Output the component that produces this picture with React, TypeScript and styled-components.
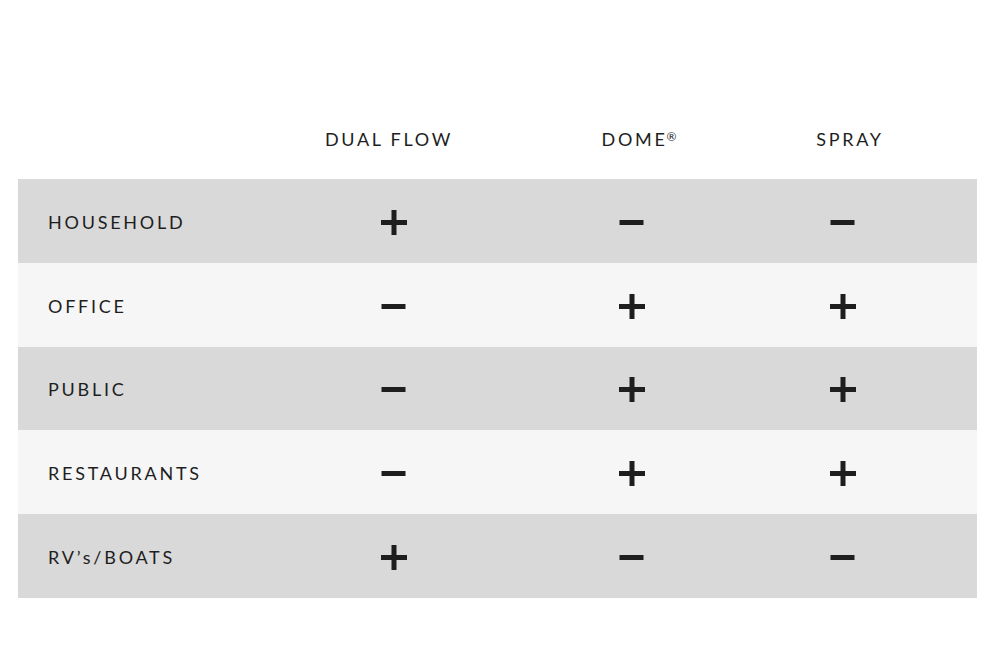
import React from "react";
import styled, { createGlobalStyle } from "styled-components";

const GlobalStyle = createGlobalStyle`
  html, body { margin: 0; padding: 0; background: #ffffff; }
  body { font-family: Lato, "Open Sans", Arial, sans-serif; color: #1e1e1e; }
`;

const Page = styled.div`
  width: 1000px;
  height: 667px;
  box-sizing: border-box;
  padding: 99px 23px 0 18px;
`;

const Grid = styled.div`
  display: grid;
  grid-template-columns: 215px 322px 154px 268px;
`;

const HeaderRow = styled(Grid)`
  height: 80px;
  align-items: center;
`;

const HeaderCell = styled.div<{ $shift?: number }>`
  text-align: center;
  font-size: 18px;
  letter-spacing: 2.7px;
  text-transform: uppercase;
  color: #1e1e1e;
  transform: translateX(${(p) => p.$shift ?? 0}px);
`;

const Reg = styled.sup`
  font-size: 12px;
  vertical-align: 5px;
  letter-spacing: 0;
  margin-left: -1px;
`;

const Row = styled(Grid)<{ $shade: boolean }>`
  height: 83.8px;
  align-items: center;
  background: ${(p) => (p.$shade ? "#d9d9d9" : "#f6f6f6")};
`;

const Label = styled.div`
  padding: 2px 0 0 30px;
  font-size: 18px;
  letter-spacing: 2.75px;
  color: #1e1e1e;
  white-space: nowrap;
`;

const SignCell = styled.div`
  display: flex;
  justify-content: center;
  align-items: center;
  padding-top: 3px;
`;

const Plus = () => (
  <svg width="26" height="25" viewBox="0 0 26 25" aria-label="plus">
    <rect x="0" y="10" width="26" height="5" fill="#1e1e1e" />
    <rect x="10.5" y="0" width="5" height="25" fill="#1e1e1e" />
  </svg>
);

const Minus = () => (
  <svg width="26" height="25" viewBox="0 0 26 25" aria-label="minus">
    <rect x="0.5" y="10" width="24" height="5" fill="#1e1e1e" />
  </svg>
);

const rows: { label: string; values: boolean[] }[] = [
  { label: "HOUSEHOLD", values: [true, false, false] },
  { label: "OFFICE", values: [false, true, true] },
  { label: "PUBLIC", values: [false, true, true] },
  { label: "RESTAURANTS", values: [false, true, true] },
  { label: "RV\u2019s/BOATS", values: [true, false, false] },
];

export default function App() {
  return (
    <Page>
      <GlobalStyle />
      <HeaderRow>
        <div />
        <HeaderCell $shift={-5}>Dual Flow</HeaderCell>
        <HeaderCell $shift={7}>
          Dome<Reg>®</Reg>
        </HeaderCell>
        <HeaderCell $shift={7}>Spray</HeaderCell>
      </HeaderRow>
      {rows.map((r, i) => (
        <Row key={r.label} $shade={i % 2 === 0}>
          <Label>{r.label}</Label>
          {r.values.map((v, j) => (
            <SignCell key={j}>{v ? <Plus /> : <Minus />}</SignCell>
          ))}
        </Row>
      ))}
    </Page>
  );
}
